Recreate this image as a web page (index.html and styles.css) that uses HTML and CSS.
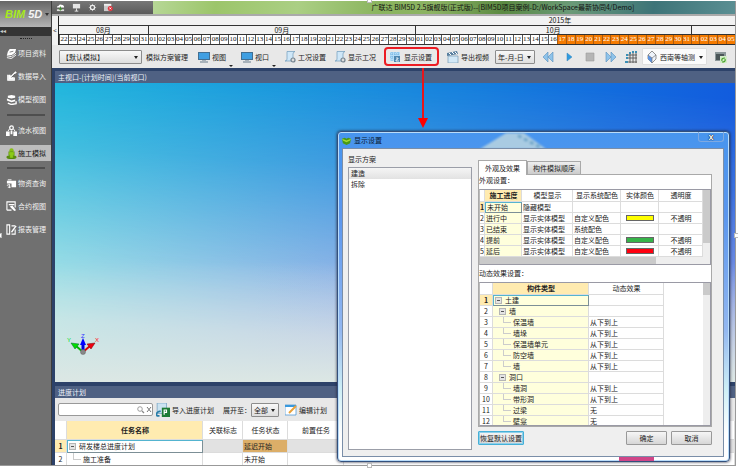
FILE: index.html
```html
<!DOCTYPE html>
<html lang="zh-CN">
<head>
<meta charset="utf-8">
<title>广联达 BIM5D</title>
<link rel="stylesheet" href="styles.css">
</head>
<body>
<div class="app">
  <aside class="side">
    <button class="logo" aria-label="BIM 5D"><b><i>BIM</i> 5D</b><span class="tri"></span></button>
    <div class="collapse">◂◂</div>
    <nav class="nav">
      <span class="grip"></span>
      <a href="#"><svg viewBox="0 0 12 12"><path d="M4 1h7l-1 4-4 3H1l1-4z" fill="#fff"/><path d="M1 8.500l5 1 5-4M1 10.500l5 1 5-4" fill="none" stroke="#fff"/><path d="M4 4.500l4-1" stroke="#777"/></svg>项目资料</a>
      <a href="#"><svg viewBox="0 0 12 12"><path d="M2 4v6h7V7" fill="#ddd" stroke="#fff" stroke-width="1.400"/><path d="M11 1L5 7M4 4v4h4" fill="none" stroke="#fff" stroke-width="2"/><path d="M10 3L6 7" stroke="#555"/></svg>数据导入</a>
      <a href="#"><svg viewBox="0 0 12 12"><path d="M2 2l4-1 4 1v2L6 5 2 4zM1 5l5 2 4-1v2L6 9 1 7z" fill="#fff"/><path d="M2 10l4 1.500 5-1V8" fill="none" stroke="#fff" stroke-width="1.500"/></svg>模型视图</a>
      <hr>
      <a href="#"><svg viewBox="0 0 12 12"><circle cx="6" cy="3" r="2" fill="none" stroke="#fff" stroke-width="1.400"/><path d="M4 4L2 7M8 4l2 3" stroke="#fff"/><path d="M0 7h4v5H0zM8 7h4v5H8zM5 6h2v4H5z" fill="#fff"/></svg>流水视图</a>
      <a href="#" class="on"><svg viewBox="0 0 12 12"><ellipse cx="6" cy="10" rx="5.500" ry="2" fill="#598b10"/><circle cx="6" cy="2.500" r="2.300" fill="#86be16"/><path d="M3 4h6v4H8v3H4V8H3z" fill="#8bca18" stroke="#4f7d0c" stroke-width=".5"/></svg>施工模拟</a>
      <hr>
      <a href="#"><svg viewBox="0 0 12 12"><path d="M1 3h10v7H6V6H1z" fill="#fff"/><path d="M2 2h4M1 8l3-1v4M2 10h3" fill="none" stroke="#fff"/></svg>物资查询</a>
      <a href="#"><svg viewBox="0 0 12 12"><path d="M1 10V1h9v6M3 4h6M1 10h5" fill="none" stroke="#fff" stroke-width="1.200"/><path d="M4 6l3-1 4 5-2 1z" fill="#fff"/></svg>合约视图</a>
      <a href="#"><svg viewBox="0 0 12 12"><path d="M1 1h3v10H1zM6 2h4M6 11h4V6" fill="none" stroke="#fff" stroke-width="1.200"/><path d="M11 2L6 9" stroke="#fff" stroke-width="1.500"/></svg>报表管理</a>
    </nav>
  </aside>

  <main class="main">
    <header class="titlebar">
      <div class="quick">
        <button aria-label="云"><svg viewBox="0 0 10 10"><path d="M1 5q0-2 2-2 1-2 3-1 3 0 3 3z" fill="#fff"/><path d="M1 7h8v2H1z" fill="#ddd"/><path d="M5 4v4M3 6l2 2 2-2" stroke="#3b9328" fill="none"/></svg></button>
        <button aria-label="展示"><svg viewBox="0 0 10 10"><path d="M1 1h8v5H1z" fill="#e6e6e6"/><path d="M5 6v3M3 9h4" stroke="#eee"/></svg></button>
        <button aria-label="设置"><svg viewBox="0 0 10 10"><circle cx="5" cy="5" r="2.300" fill="none" stroke="#eee" stroke-width="1.400"/><path d="M5 1v1M5 8v1M1 5h1M8 5h1M2 2l1 1M7 7l1 1M8 2L7 3M3 7L2 8" stroke="#ddd"/></svg></button>
        <button aria-label="关闭"><svg viewBox="0 0 10 10"><path d="M0 1h8v8H0z" fill="#c9c9c9"/><path d="M0 1h8v2H0z" fill="#eee"/><circle cx="7" cy="6" r="2.800" fill="#e0303a"/><path d="M6 5l2 2M8 5L6 7" stroke="#fff"/></svg></button>
      </div>
      <h1>广联达 BIM5D 2.5旗舰版(正式版)--[BIM5D项目案例-D:/WorkSpace最新协同4/Demo]</h1>
    </header>

    <section class="timeline">
      <button class="back" aria-label="向前">&lt;</button>
      <div class="scale">
        <div class="year">2015年</div>
        <div class="months"><span>08月</span><span>09月</span><span>10月</span><span></span></div>
        <div class="days" id="days"></div>
      </div>
    </section>

    <div class="toolbar">
      <label class="combo scheme"><select aria-label="模拟方案"><option>【默认模拟】</option></select></label>
      <button class="manage">模拟方案管理</button>
      <button><svg class="ic" viewBox="0 0 12 12"><path d="M0 1h12v8H0z" fill="#426f92"/><path d="M1 2h10v6H1z" fill="#3f9fe2"/><path d="M4 9h4v1h2v2H2v-2h2z" fill="#a8b2ba"/></svg>视图<span class="more"></span></button>
      <button><svg class="ic" viewBox="0 0 12 12"><path d="M0 1h12v8H0z" fill="#426f92"/><path d="M1 2h10v6H1z" fill="#3f9fe2"/><path d="M4 9h4v1h2v2H2v-2h2z" fill="#a8b2ba"/></svg>视口<span class="more"></span></button>
      <button><svg class="ic" viewBox="0 0 12 12"><path d="M3 .5h8Q9 1 9 3v7H1q2 0 2-2z" fill="#cfe7f8" stroke="#6e9cbd" stroke-width=".7"/><circle cx="9" cy="9" r="2" fill="#ddd" stroke="#74838f" stroke-width="1.200"/></svg>工况设置</button>
      <button><svg class="ic" viewBox="0 0 12 12"><path d="M3 .5h8Q9 1 9 3v7H1q2 0 2-2z" fill="#cfe7f8" stroke="#6e9cbd" stroke-width=".7"/><circle cx="9" cy="9" r="2" fill="#ddd" stroke="#74838f" stroke-width="1.200"/></svg>显示工况</button>
      <button class="marked"><svg class="ic" viewBox="0 0 12 12"><path d="M1 1h10v9H1z" fill="#b5dcf7"/><path d="M1 3h10M1 6h10M3 1v9M6 1v9M9 1v9" stroke="#66a9dc" stroke-width=".8" stroke-dasharray="1 1"/><path d="M5 5h6v6H5z" fill="#4f86b0"/><path d="M7 7h2v1L7 9v1h3" fill="none" stroke="#fff" stroke-width=".8"/></svg>显示设置</button>
      <button><svg class="ic" viewBox="0 0 12 12"><path d="M1 5h10v7H1z" fill="#d2e8f7" stroke="#7698b3" stroke-width=".7"/><path d="M0 2l10-2 1 3L0 5z" fill="#587f9f"/><path d="M2 2l2 2M5 1l2 2M8 1l2 2" stroke="#fff"/></svg>导出视频</button>
      <label class="combo date"><select aria-label="日期格式"><option>年-月-日</option></select></label>
      <div class="player">
        <button aria-label="快退"><svg class="ic" viewBox="0 0 12 12"><path d="M6 1v10L1 6zM11 1v10L6 6z" fill="#8fc3ea" stroke="#568fbd" stroke-width=".6"/></svg></button>
        <button aria-label="播放"><svg class="ic" viewBox="0 0 12 12"><path d="M4 2l5 4-5 4z" fill="#2e9be0" stroke="#3d87bb" stroke-width=".5"/></svg></button>
        <button aria-label="停止"><svg class="ic" viewBox="0 0 12 12"><path d="M2 2h8v8H2z" fill="#b5b5b5" stroke="#9a9a9a" stroke-width=".6"/></svg></button>
        <button aria-label="快进"><svg class="ic" viewBox="0 0 12 12"><path d="M1 1v10l5-5zM6 1v10l5-5z" fill="#8fc3ea" stroke="#568fbd" stroke-width=".6"/></svg></button>
      </div>
      <button aria-label="轴网"><svg class="ic" viewBox="0 0 12 12"><path d="M2 4h10M2 7h10M2 11h10M5 1v11M8 1v11M11 1v11" stroke="#555" stroke-width=".9"/><path d="M1 3h2v2H1zM1 6h2v2H1zM0 10h3v2H0zM4 1h2v2H4zM7 0h2v2H7zM10 0h2v2h-2z" fill="#3b8fb5"/></svg></button>
      <label class="combo view"><svg class="ic" viewBox="0 0 12 12"><path d="M6 0l4 4v4l-4 4-4-4V4z" fill="#eef3fa" stroke="#777" stroke-width=".8"/><path d="M2 4l4 3v5L2 8z" fill="#5b93e3"/><path d="M2 4l4 3 4-3M6 7v5" fill="none" stroke="#777" stroke-width=".7"/></svg><select aria-label="视角"><option>西南等轴测</option></select></label>
      <button aria-label="刷新"><svg class="ic" viewBox="0 0 12 12"><path d="M0 1h11v9H0z" fill="#8d989a"/><path d="M1 3h8v6H1z" fill="#4b5658"/><path d="M5 5h7v7H5z" fill="#d2edc7"/><path d="M7 10q-1-3 3-3M10 8q1 3-3 3" fill="none" stroke="#48a02b" stroke-width="1.200"/></svg></button>
    </div>

    <section class="stage">
      <h2 class="bar">主视口-[计划时间](当前视口)</h2>
      <div class="view3d">
        <svg class="axis" viewBox="0 0 36 26">
          <path d="M18 20L11 14" stroke="#0b0" stroke-width="2"/><path d="M6 11l8 1-4 5z" fill="#0d0" stroke="#063" stroke-width=".5"/>
          <path d="M18 20l7-6" stroke="#d00" stroke-width="2"/><path d="M30 11l-8 1 4 5z" fill="#f00010" stroke="#700" stroke-width=".5"/>
          <path d="M18 19v-7" stroke="#00d" stroke-width="3"/><path d="M18 6l3 7h-6z" fill="#00f"/><circle cx="18" cy="20" r="2.500" fill="#888" stroke="#666" stroke-width=".5"/>
          <text x="2" y="10" fill="#0d2">Y</text><text x="16" y="6" fill="#33f">Z</text><text x="30" y="10" fill="#f22">X</text>
        </svg>
      </div>
    </section>

    <section class="plan">
      <h2 class="bar">进度计划</h2>
      <div class="plantools">
        <div class="search"><input type="text" aria-label="搜索"><svg viewBox="0 0 16 8"><circle cx="4" cy="3" r="2.300" fill="none" stroke="#888" stroke-width=".8"/><path d="M6 5l2 2" stroke="#888" stroke-width="1.200"/><path d="M11 1l4 5M15 1l-4 5" stroke="#777"/></svg></div>
        <button><svg class="ic big" viewBox="0 0 12 12"><path d="M1 0h8v9H1z" fill="#cbe3f1" stroke="#6d9ec0" stroke-width=".6"/><path d="M5 4h7v8H5z" fill="#1d7b35"/><path d="M7 10V6h2v2H7" fill="none" stroke="#fff"/><path d="M4 7q-5 1-3 4h2" fill="none" stroke="#287ca7" stroke-width="1.400"/></svg>导入进度计划</button>
        <label class="expand">展开至：<span class="combo level"><select><option>全部</option></select></span></label>
        <button class="edit"><svg class="ic" viewBox="0 0 12 12"><path d="M0 1h11v10H0z" fill="#fff" stroke="#3e8ed0" stroke-width=".7"/><path d="M0 1h11v2H0z" fill="#3999dd"/><path d="M11 2L4 9" stroke="#e9a13a" stroke-width="2"/></svg>编辑计划</button>
      </div>
      <table class="tasks">
        <colgroup><col class="t0"><col class="t1"><col class="t2"><col class="t3"><col class="t4"><col></colgroup>
        <thead><tr><th></th><th class="hot">任务名称</th><th>关联标志</th><th>任务状态</th><th>前置任务</th><th></th></tr></thead>
        <tbody>
          <tr class="cur"><td>1</td><td class="sel"><span class="box"></span>研发楼总进度计划</td><td></td><td class="late">延迟开始</td><td></td><td></td></tr>
          <tr><td>2</td><td><span class="leaf"></span>施工准备</td><td></td><td>未开始</td><td></td><td></td></tr>
        </tbody>
      </table>
    </section>
  </main>
</div>

<svg class="arrow" viewBox="0 0 10 60" aria-hidden="true"><path d="M5 0v52" stroke="#e8151b" stroke-width="2"/><path d="M0 50h10L5 60z" fill="#f00"/></svg>

<div class="dialog" role="dialog" aria-label="显示设置">
  <svg class="ghost" viewBox="0 0 66 18" preserveAspectRatio="none"><path d="M0 18L26 0h18l22 18z" fill="#a9cbe2"/><path d="M38 3l22 13" stroke="#6da4c8" stroke-width="3" stroke-dasharray="4 3"/></svg>
  <div class="dtitle"><svg viewBox="0 0 10 10"><path d="M0 3l3-1 2 1 2-1 3 1-1 5-4 2-4-2z" fill="#4a9a13"/><path d="M0 3l5 2 5-2-1 2-4 2-4-2z" fill="#a5db32"/></svg>显示设置<button class="close" aria-label="关闭">x</button></div>
  <div class="dbody">
    <section class="schemes">
      <h3>显示方案</h3>
      <ul><li class="on">建造</li><li>拆除</li></ul>
    </section>
    <section class="right">
      <div class="tabs"><button class="on">外观及效果</button><button>构件模拟顺序</button></div>
      <div class="pane">
        <h3>外观设置：</h3>
        <div class="grid1">
          <div class="cells">
            <table>
              <colgroup><col class="a0"><col class="a1"><col class="a2"><col class="a3"><col class="a4"><col></colgroup>
              <thead><tr><th></th><th class="hot">施工进度</th><th>模型显示</th><th>显示系统配色</th><th>实体颜色</th><th>透明度</th></tr></thead>
              <tbody>
                <tr class="cur"><td>1</td><td class="sel">未开始</td><td>隐藏模型</td><td></td><td></td><td></td></tr>
                <tr><td>2</td><td>进行中</td><td>显示实体模型</td><td>自定义配色</td><td><span class="sw yellow"></span></td><td>不透明</td></tr>
                <tr><td>3</td><td>已结束</td><td>显示实体模型</td><td>系统配色</td><td></td><td></td></tr>
                <tr><td>4</td><td>提前</td><td>显示实体模型</td><td>自定义配色</td><td><span class="sw green"></span></td><td>不透明</td></tr>
                <tr><td>5</td><td>延后</td><td>显示实体模型</td><td>自定义配色</td><td><span class="sw red"></span></td><td>不透明</td></tr>
              </tbody>
            </table>
            <div class="hbar"></div>
          </div>
          <div class="vbar"></div>
        </div>
        <h3 class="second">动态效果设置：</h3>
        <div class="grid2">
          <div class="cells">
            <table>
              <colgroup><col class="b0"><col class="b1"><col class="b2"></colgroup>
              <thead><tr><th></th><th class="hot">构件类型</th><th>动态效果</th></tr></thead>
              <tbody>
                <tr class="cur"><td>1</td><td class="sel"><span class="box"></span>土建</td><td></td></tr>
                <tr><td>2</td><td><span class="box in"></span>墙</td><td></td></tr>
                <tr><td>3</td><td><span class="leaf deep"></span>保温墙</td><td>从下到上</td></tr>
                <tr><td>4</td><td><span class="leaf deep"></span>墙垛</td><td>从下到上</td></tr>
                <tr><td>5</td><td><span class="leaf deep"></span>保温墙单元</td><td>从下到上</td></tr>
                <tr><td>6</td><td><span class="leaf deep"></span>防空墙</td><td>从下到上</td></tr>
                <tr><td>7</td><td><span class="leaf deep"></span>墙</td><td>从下到上</td></tr>
                <tr><td>8</td><td><span class="box in"></span>洞口</td><td></td></tr>
                <tr><td>9</td><td><span class="leaf deep"></span>墙洞</td><td>从下到上</td></tr>
                <tr><td>10</td><td><span class="leaf deep"></span>带形洞</td><td>从下到上</td></tr>
                <tr><td>11</td><td><span class="leaf deep"></span>过梁</td><td>无</td></tr>
                <tr><td>12</td><td><span class="leaf deep"></span>壁龛</td><td>无</td></tr>
              </tbody>
            </table>
          </div>
          <div class="vbar short"></div>
        </div>
      </div>
      <footer><button class="reset">恢复默认设置</button><button>确定</button><button>取消</button></footer>
    </section>
  </div>
  <span class="behind"></span>
</div>
<i class="knob top"></i><i class="knob bottom"></i><i class="knob left"></i><i class="knob rgt"></i>
<script src="app.js"></script>
</body>
</html>
```
FILE: styles.css
```css
* { box-sizing: border-box; }
html, body { height: 100%; }
body {
  margin: 0;
  padding: 1px 2px 3px 0;
  position: relative;
  overflow: hidden;
  background: #fff;
  color: #222;
  font: 7px/10px "Noto Sans CJK SC", "Noto Sans", sans-serif;
}
button, input, select { font: inherit; color: inherit; margin: 0; padding: 0; border: 0; background: none; }
button { display: flex; align-items: center; gap: 2px; white-space: nowrap; }
h1, h2, h3, ul { margin: 0; padding: 0; font-size: 7px; font-weight: 400; list-style: none; }
svg { display: block; flex: none; }

.app { display: flex; height: 100%; border-right: 1px solid #999; border-bottom: 1px solid #999; }

/* sidebar */
.side { flex: none; width: 52px; background: #707070; border-right: 1px solid #3c3c3c; }
.logo {
  width: 100%; height: 26px; padding-left: 5px; gap: 3px;
  background: linear-gradient(#666, #8c8c8c 50%, #b4b4b4);
  color: #f3f3f3; font: 700 11px/14px "Liberation Sans", sans-serif; font-style: italic;
}
.logo i { color: #a6ea1c; }
.tri { border: 2px solid transparent; border-top: 3px solid #333; border-bottom: 0; }
.collapse { height: 9px; background: #343434; color: #ccc; line-height: 8px; font-size: 6px; }
.nav { display: flex; flex-direction: column; }
.grip { width: 12px; margin: 2px auto 6px; border-top: 1px dotted #222; }
.nav a {
  display: flex; align-items: center; gap: 1px; height: 16px; margin-bottom: 7px;
  padding-left: 6px; color: #f2f2f2; text-decoration: none; white-space: nowrap;
}
.nav svg { width: 11px; height: 11px; }
.nav a.on { background: #bdbdbd; color: #111; margin-bottom: 6px; }
.nav hr { width: 38px; margin: 0 auto 6px; border: 0; border-top: 2px solid #4e4e4e; }

/* main column */
.main { flex: 1; min-width: 0; display: flex; flex-direction: column; }
.titlebar {
  display: flex; height: 15px; flex: none;
  background: linear-gradient(100deg, #b9d99a 14%, #9cc56a 24%, #abcf84 36%, #8ab45e 48%, #8cb363 56%, #5b8a42 66%, #6a9a78 76%, #3d7478 88%, #5b8f93);
  border-bottom: 2px solid #aaa;
}
.quick { display: flex; gap: 7px; align-items: center; width: 101px; padding-left: 4px; background: linear-gradient(#777, #5a5a5a); }
.quick svg { width: 9px; height: 9px; }
.titlebar h1 { flex: 1; color: #111; text-align: center; line-height: 12px; padding-left: 118px; }

.timeline { display: flex; flex: none; height: 29px; background: #f2f2f2; }
.back { width: 7px; justify-content: center; border-right: 1px solid #222; font-size: 6px; }
.scale { flex: 1; min-width: 0; display: flex; flex-direction: column; color: #111; }
.year { height: 10px; border-bottom: 1px solid #333; text-align: center; padding-left: 326px; line-height: 9px; }
.months { display: grid; grid-template-columns: 10fr 30fr 31fr 5fr; height: 9px; border-bottom: 1px solid #333; text-align: center; line-height: 8px; }
.months span + span { border-left: 1px solid #333; }
.days { display: grid; grid-template-columns: repeat(76, 1fr); height: 10px; background: #fff; font: 7px/9px "Liberation Serif", serif; text-align: center; border-bottom: 1px solid #333; }
.days span { min-width: 0; border-left: 1px solid #555; overflow: hidden; }
.days .plan-day { background: #f47a00; color: #fff; border-color: #a85a10; }

.toolbar { display: flex; align-items: center; gap: 8px; height: 23px; flex: none; padding: 0 7px; background: #e8e8e8; }
.ic { width: 12px; height: 12px; }
.more { align-self: flex-end; margin: 0 0 -4px 1px; border: 2px solid transparent; border-top-color: #222; border-bottom: 0; }
.combo {
  display: flex; align-items: center; position: relative; height: 14px;
  border: 1px solid #8c8c8c; border-radius: 1px; background: linear-gradient(#f8f8f8, #dedede);
}
.combo select { appearance: none; width: 100%; height: 100%; padding-left: 2px; outline: 0; }
.combo::after { content: ""; position: absolute; right: 3px; top: 5px; border: 2px solid transparent; border-top: 3px solid #222; border-bottom: 0; }
.scheme { width: 83px; margin-right: -4px; }
.manage { margin-right: 2px; }
.date { width: 40px; margin-left: -2px; }
.view { width: 65px; height: 17px; margin-left: -3px; padding-left: 3px; background: #fbfbfb; border-color: #ddd; }
.view::after { top: 7px; }
.marked { height: 19px; padding: 0 5px 0 3px; border: 2px solid #ec1c24; border-radius: 4px; gap: 3px; }
.player { display: flex; gap: 9px; margin-left: -1px; }

.bar { height: 12px; padding-left: 3px; background: #4f6183; color: #eef2fa; line-height: 12px; }
.stage { flex: 1; min-height: 0; display: flex; flex-direction: column; padding: 3px 0 4px 3px; background: #2d4269; }
.view3d { position: relative; flex: 1; min-height: 0; background: linear-gradient(96deg, #10b1dc, #1286dd 50%, #1258de); }
.view3d::before {
  content: ""; position: absolute; inset: 0;
  background: linear-gradient(to right, #b2e5e7, #aebee9 42%, #a0a6e4);
  mask-image: linear-gradient(184deg, transparent 4%, rgba(0, 0, 0, .3) 32%, rgba(0, 0, 0, .8) 64%, #000 82%);
}
.view3d::after { content: ""; position: absolute; inset: 60% 0 0; background: linear-gradient(transparent, #dce7e4); }
.axis { position: absolute; z-index: 1; left: 10px; bottom: 24px; width: 36px; height: 26px; font: 6px "Liberation Sans", sans-serif; overflow: visible; }

.plan { flex: none; height: 79px; overflow: hidden; padding-left: 3px; background: #2d4269; }
.plantools { display: flex; align-items: center; gap: 3px; height: 23px; padding-left: 3px; background: #e8e8e8; }
.search { display: flex; align-items: center; width: 95px; height: 13px; border: 1px solid #999; border-radius: 2px; background: #fff; }
.search input { flex: 1; min-width: 0; outline: 0; }
.search svg { width: 16px; height: 8px; }
.ic.big { width: 14px; height: 14px; }
.expand { display: flex; align-items: center; margin-left: 6px; }
.level { width: 28px; }
.edit { margin-left: 3px; }

table { border-collapse: separate; border-spacing: 0; table-layout: fixed; width: 100%; background: #fff; line-height: 9px; }
th, td { padding: 0 0 0 1px; overflow: hidden; white-space: nowrap; text-align: left; font-weight: 400; border-right: 1px solid #dcdcdc; border-bottom: 1px solid #dcdcdc; }
th { text-align: center; }
th.hot { background: #ffebb0; font-weight: 700; }
td:first-child { text-align: center; padding: 0; background: #fff; }
.cur td:first-child { background: #ffebb0; font-weight: 700; }
.cur .sel { border: 1px solid #7c8f96; border-top-color: #54b4d0; border-left-color: #54b4d0; }
.tasks th { height: 19px; }
.tasks td { height: 13px; }
.tasks .cur td { background: #e2e2e2; }
.tasks .cur .sel { background: #fff; }
.tasks .cur .late { background: #dcae68; }
.tasks .cur td:first-child { background: #ffebb0; }
.t0 { width: 12px; } .t1 { width: 136px; } .t2 { width: 40px; } .t3 { width: 45px; } .t4 { width: 56px; }
.box { display: inline-block; width: 7px; height: 7px; margin-right: 3px; border: 1px solid #b5b5b5; vertical-align: -1px; background: linear-gradient(#555, #555) center / 3px 1px no-repeat #e4e4e4; }
.box.in { margin-left: 5px; }
.leaf { display: inline-block; width: 8px; height: 10px; margin: -5px 2px 0 5px; border-left: 1px solid #ccc; border-bottom: 1px solid #ccc; vertical-align: 2px; }
.leaf.deep { margin-left: 9px; }

/* annotation arrow */
.arrow { position: absolute; left: 418px; top: 68px; width: 10px; height: 60px; }

/* dialog */
.dialog {
  position: absolute; right: 8px; bottom: 7px; width: 393px; padding: 0 5px 4px 4px;
  display: flex; flex-direction: column;
  border: 1px solid #33507c; border-radius: 4px;
  background: linear-gradient(#4795ee, #5a96ee 25%, #93b7f0 60%, #cdeef5 78%, #fff 92%);
  box-shadow: inset 0 0 0 1px #b9dcfa, 0 0 3px #223;
}
.ghost { position: absolute; left: 142px; top: 1px; width: 66px; height: 16px; filter: blur(1px); }
.dtitle { position: relative; display: flex; align-items: center; gap: 3px; height: 16px; color: #081a30; }
.dtitle svg { width: 9px; height: 9px; }
.close { position: absolute; right: 0; top: 0; width: 26px; height: 10px; justify-content: center; border: 1px solid #7fa9e0; border-top: 0; border-radius: 0 0 3px 3px; color: #fff; font: 700 9px/8px "Liberation Sans", sans-serif; text-shadow: 0 0 1px #000, 0 0 1px #000; }
.dbody { position: relative; display: flex; padding: 5px 11px 11px 5px; border: 1px solid #7a8ea8; background: #efefef; }
.schemes { width: 124px; display: flex; flex-direction: column; flex: none; }
.schemes h3 { height: 13px; }
.schemes ul { flex: 1; margin-bottom: -5px; border: 1px solid #9b9ea8; background: #fff; }
.schemes li { height: 11px; padding-left: 2px; }
.schemes .on { background: linear-gradient(#f5f5f5, #e2e2e2); }
.right { flex: 1; min-width: 0; margin-left: 6px; padding-top: 6px; }
.tabs { display: flex; align-items: flex-end; height: 14px; }
.tabs button { height: 13px; justify-content: center; padding: 0 5px; border: 1px solid #a9a9a9; border-bottom: 0; background: linear-gradient(#eee, #ccc); }
.tabs .on { position: relative; height: 15px; margin-bottom: -1px; padding: 0 6px; background: #fff; }
.pane { border: 1px solid #a9a9a9; background: #fff; }
.pane h3 { height: 14px; line-height: 11px; }
.pane .second { height: 17px; line-height: 17px; }
.grid1, .grid2 { display: flex; border: 1px solid #9a9aa5; border-left-color: #bbb; }
.cells { flex: 1; min-width: 0; overflow: hidden; }
.cells th { height: 12px; }
.cells td { height: 11px; }
.cells td:nth-child(2) { background: #ffffdc; }
.a0 { width: 5px; } .a1 { width: 37px; } .a2 { width: 51px; } .a3 { width: 48px; } .a4 { width: 38px; }
.b0 { width: 13px; } .b1 { width: 96px; } .b2 { width: 75px; }
.grid1 td:last-child { text-align: center; }
.sw { display: block; width: 28px; height: 6px; margin: 0 auto; border: 1px solid #666; }
.yellow { background: #ff0; } .green { background: #37b44a; } .red { background: #ff0010; }
.hbar { height: 7px; background: linear-gradient(#cacaca, #cacaca) 0 0 / 79% 100% no-repeat #eee; }
.vbar { width: 7px; background: linear-gradient(#cacaca, #cacaca) 0 0 / 100% 53px no-repeat #eee; }
.vbar.short { background-size: 100% 12px; }
.grid2 { height: 144px; }
.grid2 table { width: 184px; }
footer { display: flex; gap: 4px; margin-top: 4px; }
footer button { width: 41px; height: 14px; justify-content: center; border: 1px solid #999; border-radius: 1px; background: linear-gradient(#f6f6f6, #d6d6d6); }
footer .reset { width: 46px; margin-right: auto; border: 1px solid #45b0d8; box-shadow: inset 0 0 0 1px #8fd0ea; }
.behind { position: absolute; right: 75px; bottom: 0; width: 35px; height: 4px; background: #d04588; }

/* selection handles on the frame */
.knob { position: absolute; width: 5px; height: 5px; background: #fff; border: 1px solid #bbb; }
.top { left: calc(50% - 2px); top: -2px; }
.bottom { left: calc(50% - 2px); bottom: 1px; }
.left { left: -3px; top: calc(50% - 2px); }
.rgt { right: -1px; top: calc(50% - 2px); }
```
FILE: app.js
```js
// Day cells from 22 August to 5 November; planned days are highlighted.
const days = document.getElementById("days");
const ranges = [[22, 31], [1, 30], [1, 31], [1, 5]];
ranges.forEach(([from, to], month) => {
  for (let d = from; d <= to; d++) {
    const cell = document.createElement("span");
    cell.textContent = String(d).padStart(2, "0");
    if (month === 3 || (month === 2 && d >= 17)) cell.className = "plan-day";
    days.append(cell);
  }
});
```
